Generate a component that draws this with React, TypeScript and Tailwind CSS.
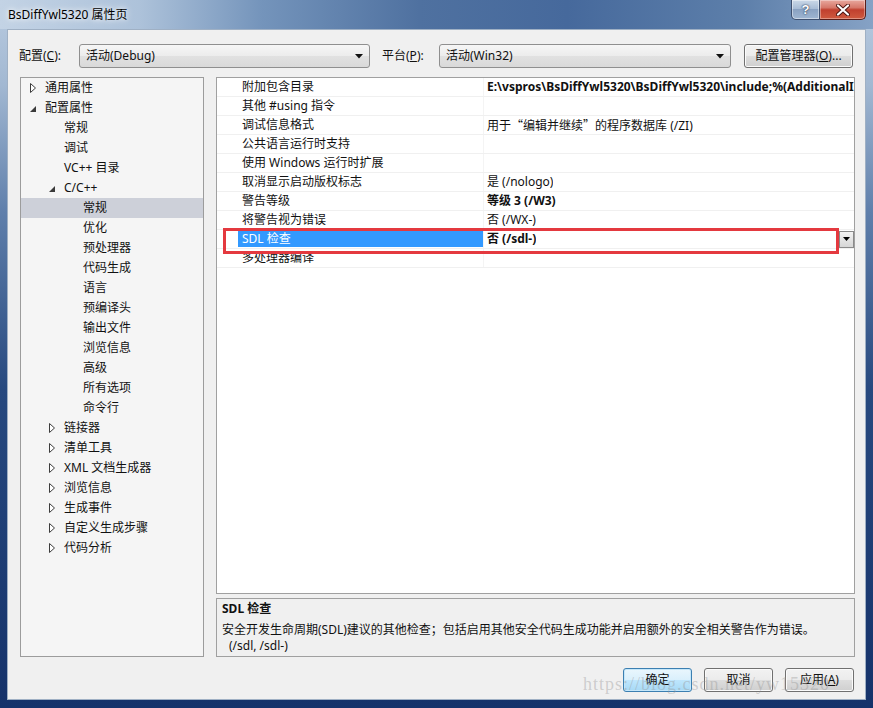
import React from "react";

type TreeItem = { label: string; level: 0 | 1 | 2; arrow?: "c" | "e"; selected?: boolean };

const tree: TreeItem[] = [
  { label: "通用属性", level: 0, arrow: "c" },
  { label: "配置属性", level: 0, arrow: "e" },
  { label: "常规", level: 1 },
  { label: "调试", level: 1 },
  { label: "VC++ 目录", level: 1 },
  { label: "C/C++", level: 1, arrow: "e" },
  { label: "常规", level: 2, selected: true },
  { label: "优化", level: 2 },
  { label: "预处理器", level: 2 },
  { label: "代码生成", level: 2 },
  { label: "语言", level: 2 },
  { label: "预编译头", level: 2 },
  { label: "输出文件", level: 2 },
  { label: "浏览信息", level: 2 },
  { label: "高级", level: 2 },
  { label: "所有选项", level: 2 },
  { label: "命令行", level: 2 },
  { label: "链接器", level: 1, arrow: "c" },
  { label: "清单工具", level: 1, arrow: "c" },
  { label: "XML 文档生成器", level: 1, arrow: "c" },
  { label: "浏览信息", level: 1, arrow: "c" },
  { label: "生成事件", level: 1, arrow: "c" },
  { label: "自定义生成步骤", level: 1, arrow: "c" },
  { label: "代码分析", level: 1, arrow: "c" },
];

const indent = ["pl-[9px]", "pl-[28px]", "pl-[47px]"];

type Row = { name: string; value: React.ReactNode; bold?: boolean; selected?: boolean };

const cjk = "font-['Noto_Sans_CJK_SC',sans-serif]";

const rows: Row[] = [
  {
    name: "附加包含目录",
    value: "E:\\vspros\\BsDiffYwl5320\\BsDiffYwl5320\\include;%(AdditionalIncludeDirectories)",
    bold: true,
  },
  { name: "其他 #using 指令", value: "" },
  {
    name: "调试信息格式",
    value: (
      <>
        用于<span className={cjk}>“</span>编辑并继续<span className={cjk}>”</span>的程序数据库 (/ZI)
      </>
    ),
  },
  { name: "公共语言运行时支持", value: "" },
  { name: "使用 Windows 运行时扩展", value: "" },
  { name: "取消显示启动版权标志", value: "是 (/nologo)" },
  { name: "警告等级", value: "等级 3 (/W3)", bold: true },
  { name: "将警告视为错误", value: "否 (/WX-)" },
  { name: "SDL 检查", value: "否 (/sdl-)", bold: true, selected: true },
  { name: "多处理器编译", value: "" },
];

function Arrow({ kind }: { kind?: "c" | "e" }) {
  return (
    <div className="w-[15px] shrink-0 flex items-center">
      {kind === "c" && (
        <svg width="7" height="10" viewBox="0 0 7 10">
          <path d="M0.5 0.5 L5.5 5 L0.5 9.5 Z" fill="#ffffff" stroke="#3c3c3c" strokeWidth="1" />
        </svg>
      )}
      {kind === "e" && (
        <svg width="6" height="6" viewBox="0 0 6 6" className="mt-[2px]">
          <path d="M6 0 L6 6 L0 6 Z" fill="#3a3a3a" />
        </svg>
      )}
    </div>
  );
}

function Combo({ text, w }: { text: string; w: string }) {
  return (
    <div
      className={`${w} h-[24px] flex items-center justify-between rounded-[3px] border border-[#8f8f8f] bg-[linear-gradient(to_bottom,#f6f6f6_0%,#ececec_50%,#e1e1e1_51%,#d9d9d9_100%)] pl-[6px] pr-[6px] leading-[16px]`}
    >
      <span>{text}</span>
      <svg width="8" height="5" viewBox="0 0 8 5">
        <path d="M0 0 H8 L4 4.5 Z" fill="#111" />
      </svg>
    </div>
  );
}

function WinButton({ children, w, primary }: { children: React.ReactNode; w: string; primary?: boolean }) {
  return (
    <div
      className={`${w} h-[24px] flex items-center justify-center rounded-[3px] border leading-[16px] ${
        primary
          ? "border-[#3c7fb1] bg-[linear-gradient(to_bottom,#eaf6fd_0%,#d9f0fc_50%,#bee6fd_51%,#a7d9f5_100%)] shadow-[inset_0_0_0_1px_#c5e7fa]"
          : "border-[#707070] bg-[linear-gradient(to_bottom,#f2f2f2_0%,#ebebeb_50%,#dddddd_51%,#cfcfcf_100%)] shadow-[inset_0_0_0_1px_#fbfbfb]"
      }`}
    >
      {children}
    </div>
  );
}

export default function App() {
  return (
    <div className="relative w-[873px] h-[708px] overflow-hidden flex flex-col text-[12px] text-[#111] font-['Noto_Sans','Noto_Sans_CJK_SC',sans-serif] bg-[linear-gradient(to_bottom,#b9cbe0_0%,#a2b8d2_12%,#5f7fab_30%,#27497f_55%,#15326a_100%)]">
      {/* title bar */}
      <div className="h-[29px] shrink-0 flex items-start justify-between bg-[linear-gradient(to_right,#c3d3e5_0%,#adc2da_16%,#7494bb_30%,#4f71a0_48%,#46699c_65%,#5d7faa_85%,#86a2c5_100%)]">
        <div className="pl-[8px] pt-[6px] leading-[17px] text-[12px] text-black [text-shadow:0_0_8px_rgba(255,255,255,0.95),0_0_4px_rgba(255,255,255,0.9)]">
          BsDiffYwl5320 属性页
        </div>
        <div className="flex mr-[7px]">
          <div className="w-[29px] h-[20px] flex items-center justify-center rounded-bl-[5px] border border-t-0 border-[#3f5170] bg-[linear-gradient(to_bottom,#cbd9e8_0%,#a9bdd6_45%,#8aa2c2_50%,#9fb6d2_100%)] shadow-[inset_0_0_0_1px_rgba(255,255,255,0.45)]">
            <span className="text-white font-bold text-[13px] leading-[14px] font-['Liberation_Sans',sans-serif] [text-shadow:0_0_2px_#2a3a55,0_0_1px_#2a3a55]">
              ?
            </span>
          </div>
          <div className="w-[46px] h-[20px] flex items-center justify-center rounded-br-[5px] border border-t-0 border-l-0 border-[#5a1e1a] bg-[linear-gradient(to_bottom,#e8a89e_0%,#d6786a_40%,#c0402e_52%,#cf5a3f_100%)] shadow-[inset_0_0_0_1px_rgba(255,255,255,0.35)]">
            <svg width="14" height="12" viewBox="0 0 14 12">
              <path d="M2 1.5 L12 10.5 M12 1.5 L2 10.5" stroke="#4a1410" strokeWidth="4" strokeLinecap="round" />
              <path d="M2 1.5 L12 10.5 M12 1.5 L2 10.5" stroke="#ffffff" strokeWidth="2.2" strokeLinecap="round" />
            </svg>
          </div>
        </div>
      </div>

      {/* client area */}
      <div className="flex-1 mx-[7px] mb-[8px] border border-[#9fb0c4] bg-[#f0f0f0] flex flex-col">
        {/* configuration row */}
        <div className="mt-[14px] pl-[11px] h-[24px] flex items-center">
          <div className="w-[60px] leading-[16px]">
            配置(<span className="underline">C</span>):
          </div>
          <Combo text="活动(Debug)" w="w-[291px]" />
          <div className="ml-[12px] w-[57px] leading-[16px]">
            平台(<span className="underline">P</span>):
          </div>
          <Combo text="活动(Win32)" w="w-[292px]" />
          <div className="ml-[13px]">
            <WinButton w="w-[109px]">
              <span>
                配置管理器(<span className="underline">O</span>)...
              </span>
            </WinButton>
          </div>
        </div>

        {/* main area */}
        <div className="mt-[9px] h-[580px] pl-[12px] flex gap-[12px]">
          {/* tree */}
          <div className="w-[184px] border border-[#9c9c9c] bg-[#f5f5f5] flex flex-col">
            {tree.map((t, i) => (
              <div
                key={i}
                className={`h-[20px] shrink-0 flex items-center ${indent[t.level]} ${t.selected ? "bg-[#cdd0d9]" : ""}`}
              >
                <Arrow kind={t.arrow} />
                <span className="leading-[16px] whitespace-nowrap">{t.label}</span>
              </div>
            ))}
          </div>

          {/* right column */}
          <div className="w-[639px] flex flex-col gap-[4px]">
            <div className="relative h-[517px] border border-[#a0a0a0] bg-white flex flex-col overflow-hidden">
              {rows.map((r, i) => (
                <div key={i} className="h-[19px] shrink-0 flex border-b border-[#f0f0f0]">
                  <div className="w-[21px] shrink-0" />
                  <div className="w-[245px] shrink-0 flex items-center">
                    <div
                      className={`w-full h-[16px] pl-[4px] flex items-center whitespace-nowrap leading-[16px] ${
                        r.selected ? "bg-[#3399ff] text-white" : ""
                      }`}
                    >
                      {r.name}
                    </div>
                  </div>
                  <div className="flex-1 min-w-0 flex items-center justify-between border-l border-[#f4f4f4]">
                    <span
                      className={`pl-[3px] whitespace-nowrap overflow-hidden leading-[16px] ${r.bold ? "font-bold" : ""}`}
                    >
                      {r.value}
                    </span>
                    {r.selected && (
                      <div className="w-[15px] h-[17px] shrink-0 flex items-center justify-center border border-[#8a8a8a] bg-[linear-gradient(to_bottom,#f4f4f4_0%,#e4e4e4_50%,#d6d6d6_100%)]">
                        <svg width="7" height="4" viewBox="0 0 7 4">
                          <path d="M0 0 H7 L3.5 4 Z" fill="#000" />
                        </svg>
                      </div>
                    )}
                  </div>
                </div>
              ))}
              {/* red annotation box */}
              <div className="absolute left-[6px] top-[150px] w-[616px] h-[26px] border-[3px] border-[#e4393f]" />
            </div>

            <div className="flex-1 border border-[#a0a0a0] bg-[#f0f0f0] pl-[5px] pt-[2px] flex flex-col">
              <div className="font-bold leading-[16px]">SDL 检查</div>
              <div className="mt-[4px] leading-[16px] whitespace-nowrap">
                安全开发生命周期(SDL)建议的其他检查<span className={cjk}>；</span>包括启用其他安全代码生成功能并启用额外的安全相关警告作为错误。
              </div>
              <div className="pl-[7px] leading-[16px]">(/sdl, /sdl-)</div>
            </div>
          </div>
        </div>

        {/* buttons */}
        <div className="mt-[11px] pr-[11px] flex justify-end gap-[12px]">
          <WinButton w="w-[69px]" primary>
            确定
          </WinButton>
          <WinButton w="w-[69px]">取消</WinButton>
          <WinButton w="w-[69px]">
            <span>
              应用(<span className="underline">A</span>)
            </span>
          </WinButton>
        </div>
      </div>

      {/* watermark (faint, over the buttons as in the reference) */}
      <div className="absolute left-[583px] top-[673px] text-[18px] leading-[22px] tracking-[1px] text-[rgba(150,150,150,0.4)] font-['Liberation_Serif',serif] whitespace-nowrap pointer-events-none">
        https://blog.csdn.net/yw15320
      </div>
    </div>
  );
}
